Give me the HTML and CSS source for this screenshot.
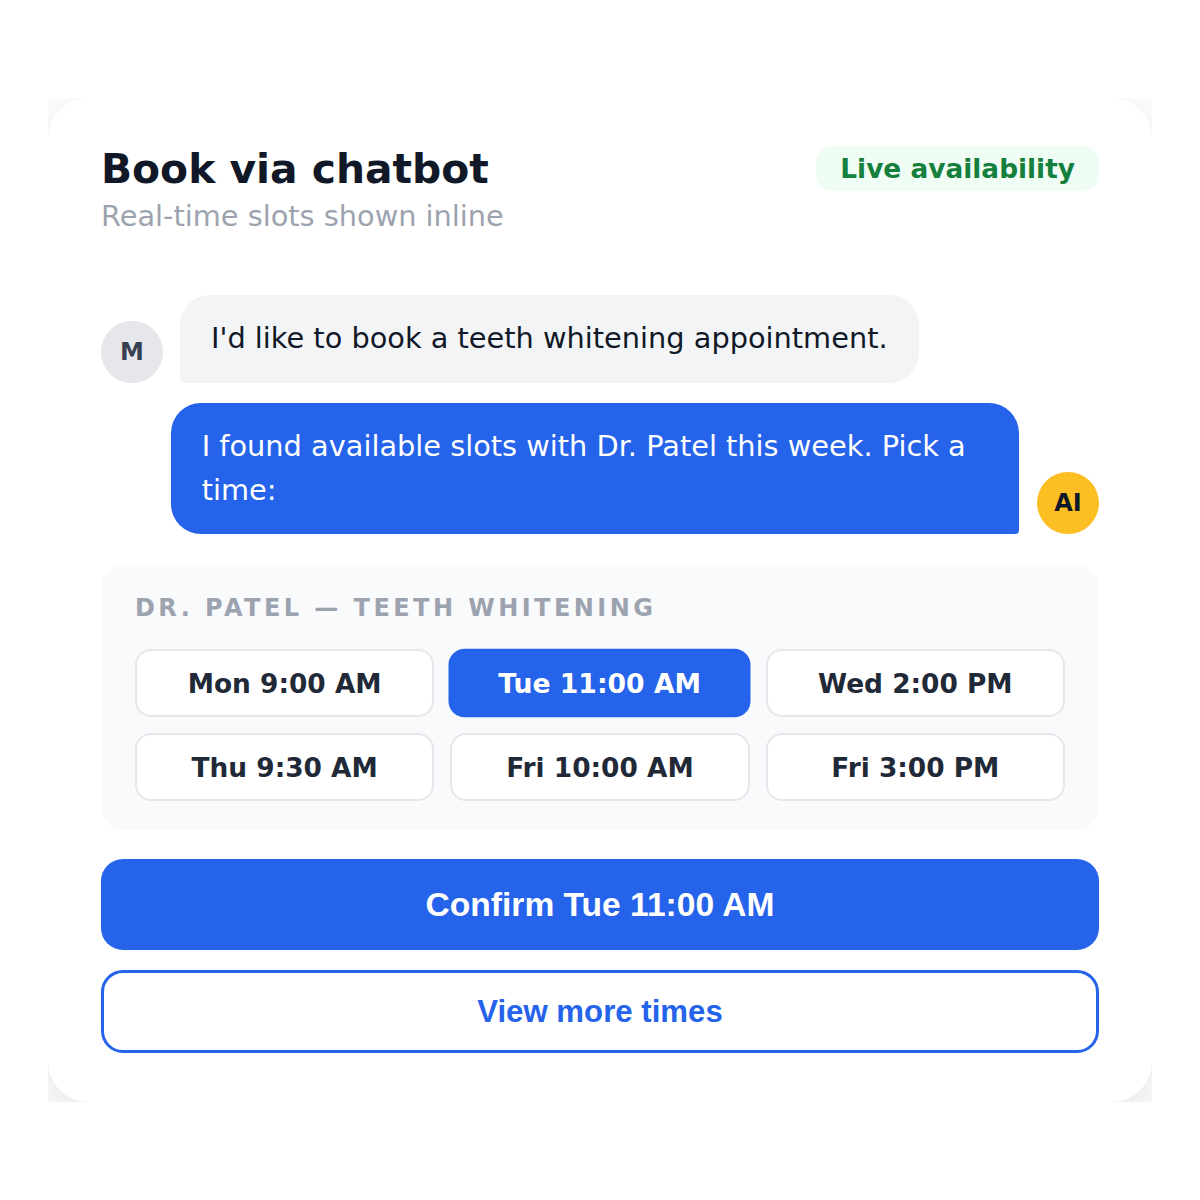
FILE: index.html
```html
<!DOCTYPE html>
<html>
  <head>
    <meta charset="UTF-8">
    <title>Book via chatbot</title>
    <link rel="stylesheet" href="styles.css">
  </head>
  <body>
    <div class="frame">
      <div class="card">
        <div class="header">
          <div>
            <h1>Book via chatbot</h1>
            <p class="subtitle">Real-time slots shown inline</p>
          </div>
          <span class="badge">Live availability</span>
        </div>

        <div class="chat">
          <div class="row user">
            <div class="avatar avatar-user">M</div>
            <div class="bubble bubble-user">I'd like to book a teeth whitening appointment.</div>
          </div>
          <div class="row bot">
            <div class="bubble bubble-bot">I found available slots with Dr. Patel this week. Pick a time:</div>
            <div class="avatar avatar-bot">AI</div>
          </div>
        </div>

        <div class="slots">
          <div class="slots-title">Dr. Patel — Teeth Whitening</div>
          <div class="slot-grid">
            <div class="slot">Mon 9:00 AM</div>
            <div class="slot selected">Tue 11:00 AM</div>
            <div class="slot">Wed 2:00 PM</div>
            <div class="slot">Thu 9:30 AM</div>
            <div class="slot">Fri 10:00 AM</div>
            <div class="slot">Fri 3:00 PM</div>
          </div>
        </div>

        <div class="actions">
          <button class="btn btn-primary">Confirm Tue 11:00 AM</button>
          <button class="btn btn-outline">View more times</button>
        </div>
      </div>
    </div>
  </body>
</html>
```

FILE: styles.css
```css
body {
  margin: 0;
  padding: 98px 48px;
  background-color: #fff;
  font-family: "DejaVu Sans", sans-serif;
}
.frame {
  overflow: hidden;
  height: 1004px;
}
.card {
  box-sizing: border-box;
  height: 1004px;
  background-color: #fff;
  border-radius: 40px;
  box-shadow: 0 10px 40px rgba(0, 0, 0, 0.12);
  padding: 46px 53px 50px;
}

.header {
  display: flex;
  justify-content: space-between;
  align-items: flex-start;
}
h1 {
  margin: 0;
  font-size: 40.8px;
  line-height: 50px;
  color: #111827;
}
.subtitle {
  margin: 4px 0 0;
  font-size: 28.8px;
  line-height: 36px;
  color: #9ca3af;
}
.badge {
  margin-top: 2px;
  background-color: #f0fdf4;
  color: #15803d;
  font-size: 26.4px;
  font-weight: bold;
  line-height: 45px;
  padding: 0 24px;
  border-radius: 16px;
}

.chat {
  margin-top: 61px;
  display: flex;
  flex-direction: column;
  gap: 20px;
}
.row {
  display: flex;
  align-items: flex-end;
  gap: 17px;
}
.row.bot {
  justify-content: flex-end;
  gap: 18px;
}
.avatar {
  flex: none;
  width: 62px;
  height: 62px;
  border-radius: 50%;
  display: flex;
  align-items: center;
  justify-content: center;
  font-size: 24px;
  font-weight: bold;
}
.avatar-user {
  background-color: #e5e7eb;
  color: #374151;
}
.avatar-bot {
  background-color: #fbbf24;
  color: #111827;
}
.bubble {
  font-size: 28.8px;
  line-height: 43.2px;
  padding: 22.4px 31px;
}
.bubble-user {
  background-color: #f3f4f6;
  color: #111827;
  border-radius: 30px 30px 30px 4px;
}
.bubble-bot {
  max-width: 85%;
  box-sizing: border-box;
  background-color: #2563eb;
  color: #fff;
  border-radius: 30px 30px 4px 30px;
}

.slots {
  margin-top: 31px;
  background-color: #f8fafc;
  border-radius: 24px;
  padding: 30px 34px 29px;
}
.slots-title {
  font-size: 24px;
  font-weight: bold;
  letter-spacing: 3.45px;
  text-transform: uppercase;
  color: #9ca3af;
  line-height: 26px;
}
.slot-grid {
  margin-top: 28px;
  display: grid;
  grid-template-columns: repeat(3, 1fr);
  gap: 16px;
}
.slot {
  height: 68px;
  box-sizing: border-box;
  border: 2px solid #e5e7eb;
  border-radius: 16px;
  background-color: #fff;
  display: flex;
  align-items: center;
  justify-content: center;
  font-size: 26.4px;
  font-weight: bold;
  color: #1f2937;
}
.slot.selected {
  background-color: #2563eb;
  border-color: #2563eb;
  color: #fff;
  transform: scale(1.01);
}

.actions {
  margin-top: 29px;
  display: flex;
  flex-direction: column;
  gap: 20px;
}
.btn {
  font-family: "Liberation Sans", Arial, sans-serif;
  font-weight: bold;
  border-radius: 22px;
  cursor: pointer;
}
.btn-primary {
  height: 91px;
  background-color: #2563eb;
  color: #fff;
  border: none;
  font-size: 33.6px;
}
.btn-outline {
  height: 83px;
  background-color: #fff;
  color: #2563eb;
  border: 3px solid #2563eb;
  font-size: 31.2px;
}
```
